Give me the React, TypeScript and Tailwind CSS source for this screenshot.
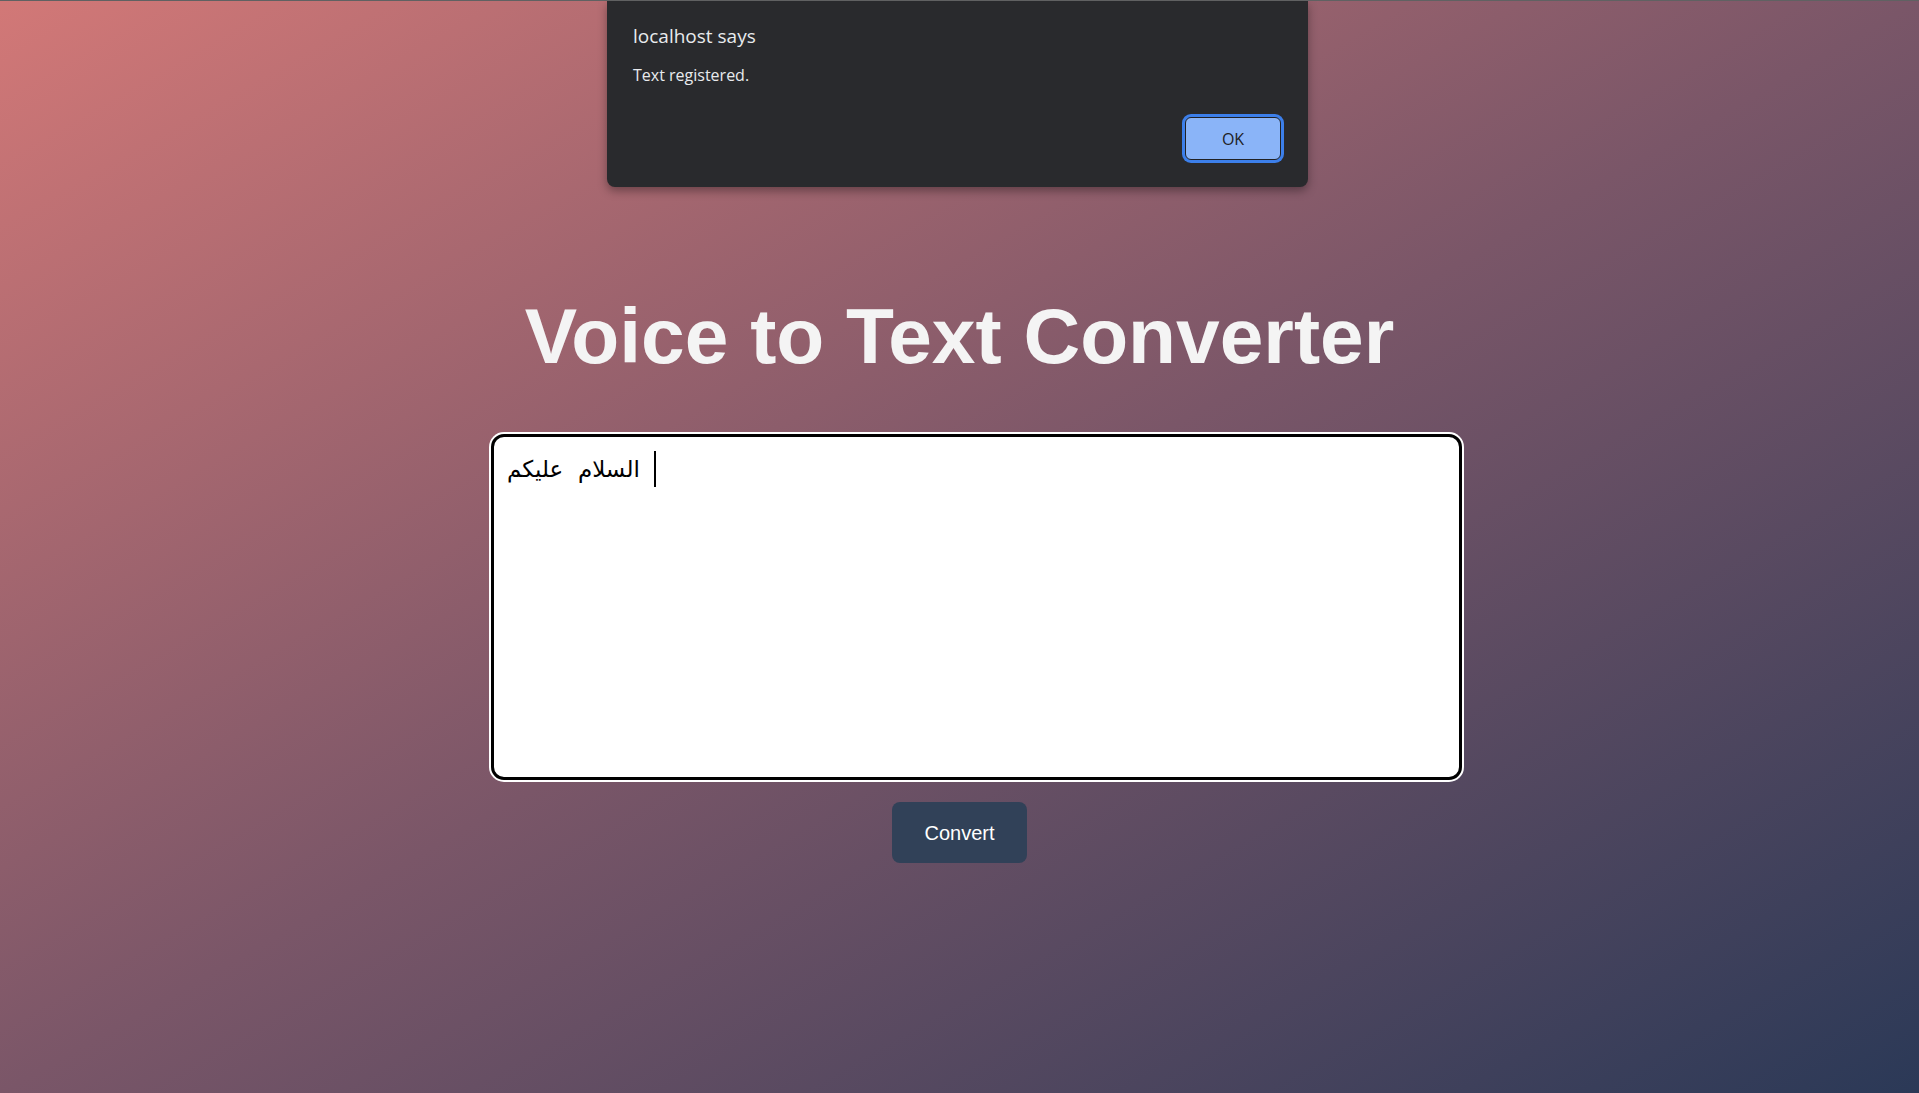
import React from "react";

const AlertBox = () => {
  return (
    <div className="absolute top-0 left-[607px] w-[701px] h-[186px] bg-[#292a2d] rounded-b-lg shadow-[0_4px_10px_rgba(0,0,0,0.35)] flex flex-col pl-[26px] pr-[27px] pb-[27px] pt-[22px] font-['Open_Sans',sans-serif]">
      <p className="text-[19px] leading-[26px] text-[#e8eaed]">localhost says</p>
      <p className="mt-[15px] text-[16px] leading-[22px] text-[#e8eaed]">Text registered.</p>
      <div className="mt-auto flex justify-end">
        <button className="w-[96px] h-[43px] rounded-md bg-[#8ab4f8] border border-[#202124] shadow-[0_0_0_3px_#3c7fea] text-[16px] text-[#202124]">
          OK
        </button>
      </div>
    </div>
  );
};

export default function App() {
  return (
    <div className="relative h-screen w-full overflow-hidden border-t border-[#606162] bg-linear-to-br/srgb from-[#d27877] via-[#7a5668] to-[#2b3957]">
      <div className="flex flex-col items-center pt-[296px] font-['Liberation_Sans',Arial,sans-serif]">
        <h1 className="text-[78.5px] leading-[78px] font-bold text-[#f4f4f4]">Voice to Text Converter</h1>

        <div className="mt-[59px] ml-[34px] w-[971px] h-[346px] rounded-[13px] border-[3px] border-black bg-white shadow-[0_0_0_2px_#ffffff] px-[13px] pt-[14px]">
          <p className="whitespace-pre text-[23px] leading-[36px] text-black font-['DejaVu_Sans',sans-serif]">
            {"السلام  عليكم  "}
            <span className="inline-block align-top w-[2px] h-[36px] bg-black" />
          </p>
        </div>

        <button className="mt-[22px] w-[135px] h-[61px] rounded-lg bg-slate-700 text-white text-[20px]">
          Convert
        </button>
      </div>

      <AlertBox />
    </div>
  );
}
